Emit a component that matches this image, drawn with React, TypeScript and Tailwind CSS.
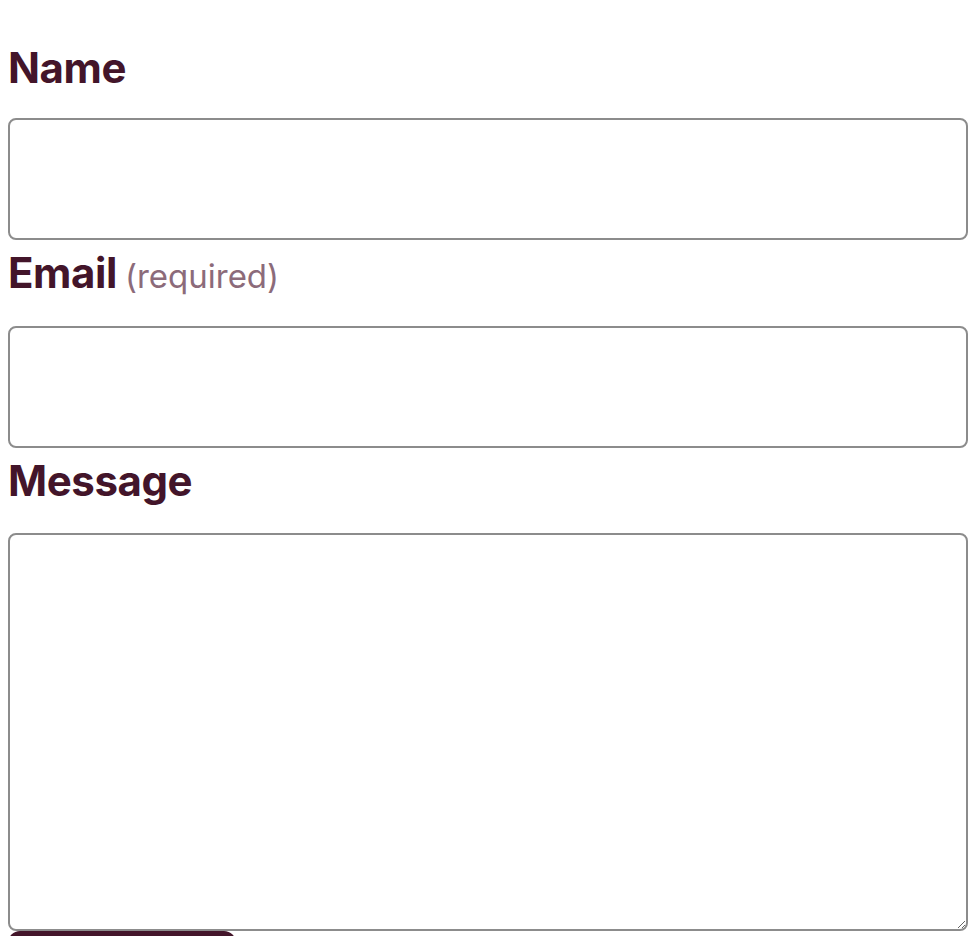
import React from 'react';

const labelCls = "block text-[42px] leading-[48px] font-bold text-[#43152a] tracking-[-0.01em]";
const fieldCls = "block w-full rounded-[8px] border-2 border-[#8c8c8c] bg-white";

export default function App() {
  return (
    <div className="min-h-screen bg-white font-['Inter',sans-serif]">
      <form className="w-[960px] ml-2 pt-[44px]">
        <label className="block">
          <span className={labelCls}>Name</span>
          <input type="text" className={`${fieldCls} h-[122px] mt-[26px]`} />
        </label>
        <label className="block mt-[9px]">
          <span className={`${labelCls} flex items-baseline gap-[8px]`}>
            Email
            <span className="text-[33px] font-normal text-[#8c6b7a] tracking-normal">(required)</span>
          </span>
          <input type="email" className={`${fieldCls} h-[122px] mt-[26px]`} />
        </label>
        <label className="block mt-[9px]">
          <span className={labelCls}>Message</span>
          <textarea className={`${fieldCls} h-[398px] mt-[28px]`} />
        </label>
        <button type="submit" className="block w-[228px] h-[56px] rounded-[12px] bg-[#43152a] text-white text-[24px] font-bold">
          Submit
        </button>
      </form>
    </div>
  );
}
